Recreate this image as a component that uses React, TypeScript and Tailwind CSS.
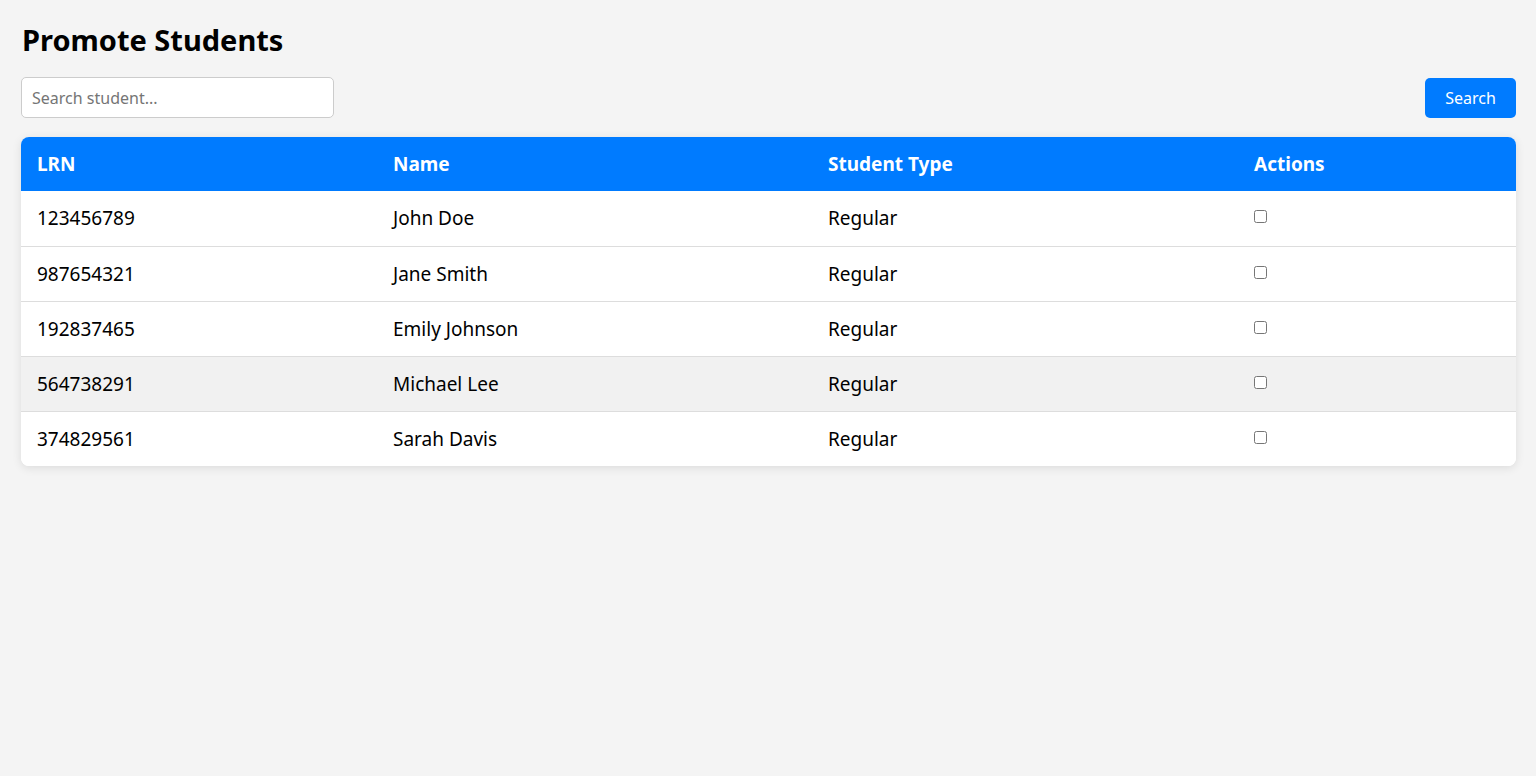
import React from "react";

const rows = [
  { lrn: "123456789", name: "John Doe", type: "Regular" },
  { lrn: "987654321", name: "Jane Smith", type: "Regular" },
  { lrn: "192837465", name: "Emily Johnson", type: "Regular" },
  { lrn: "564738291", name: "Michael Lee", type: "Regular", hover: true },
  { lrn: "374829561", name: "Sarah Davis", type: "Regular" },
];

export default function App() {
  return (
    <div
      className="min-h-screen bg-[#f4f4f4] pl-[21px] pr-[20px] pt-[20px] text-black"
      style={{ fontFamily: '"Noto Sans", sans-serif' }}
    >
      <h1 className="m-0 text-[29px] font-bold leading-[40px] pl-[1px]">Promote Students</h1>
      <div className="mt-[17px] flex items-center justify-between">
        <input
          type="text"
          placeholder="Search student..."
          className="h-[41px] w-[313px] rounded-[5px] border border-[#cccccc] bg-white px-[10px] text-[16px] text-black placeholder:text-[#757575] outline-none"
        />
        <button className="h-[40px] w-[91px] rounded-[5px] bg-[#007bff] text-[16px] text-white">
          Search
        </button>
      </div>
      <div className="mt-[19px] overflow-hidden rounded-[8px] bg-white shadow-[0_2px_10px_rgba(0,0,0,0.1)]">
        <div className="grid h-[54px] grid-cols-[356px_435px_426px_1fr] items-center bg-[#007bff] text-[19px] font-bold text-white">
          <div className="pl-[16px]">LRN</div>
          <div className="pl-[16px]">Name</div>
          <div className="pl-[16px]">Student Type</div>
          <div className="pl-[16px]">Actions</div>
        </div>
        {rows.map((r, i) => (
          <div
            key={r.lrn}
            className={`grid h-[55px] grid-cols-[356px_435px_426px_1fr] items-center text-[19px] ${
              i > 0 ? "border-t border-[#dddddd]" : ""
            } ${r.hover ? "bg-[#f1f1f1]" : "bg-white"}`}
          >
            <div className="pl-[16px]">{r.lrn}</div>
            <div className="pl-[16px]">{r.name}</div>
            <div className="pl-[16px]">{r.type}</div>
            <div className="flex items-start pl-[16px] pb-[4px]">
              <input type="checkbox" className="m-0 h-[13px] w-[13px]" />
            </div>
          </div>
        ))}
      </div>
    </div>
  );
}
